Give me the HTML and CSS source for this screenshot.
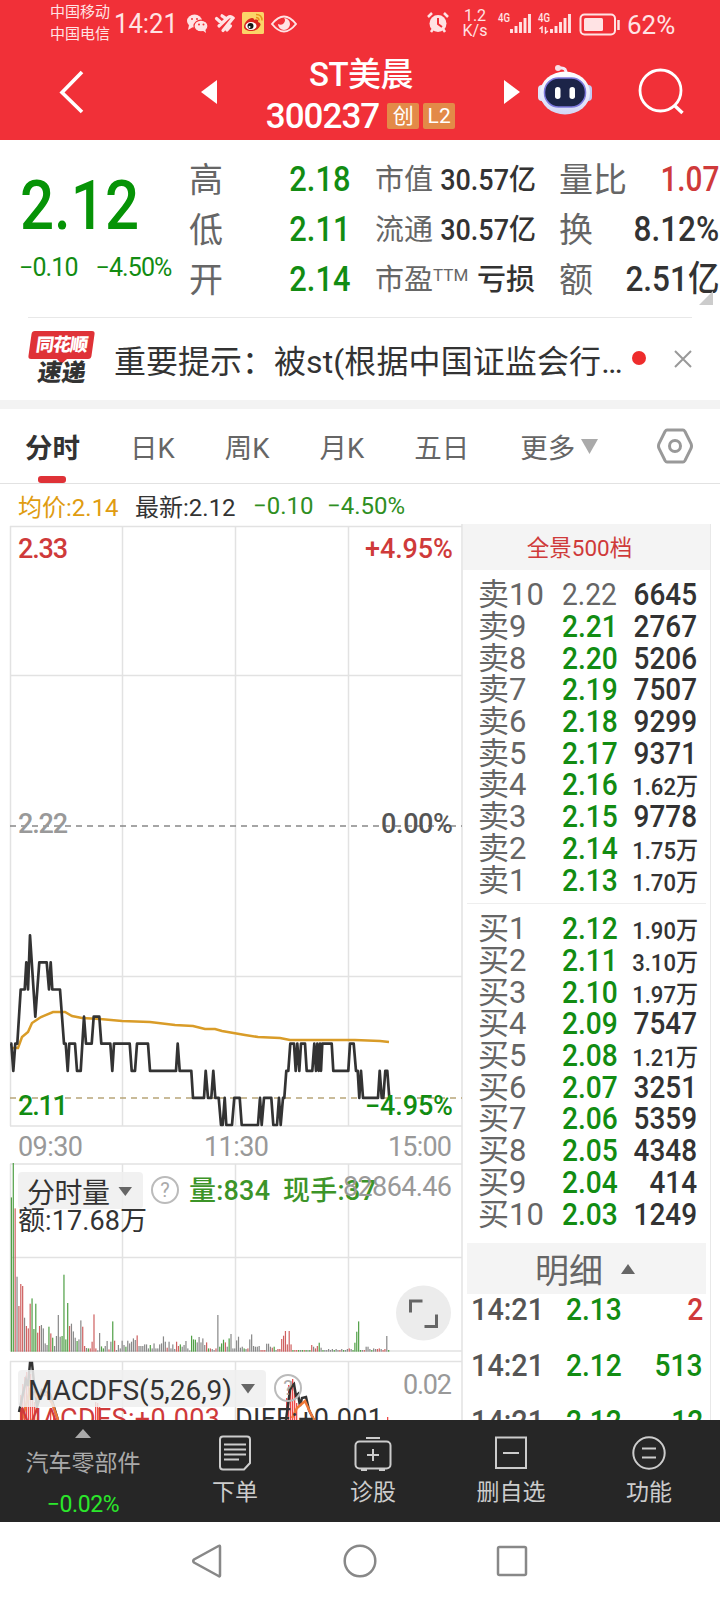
FILE: index.html
```html
<!DOCTYPE html>
<html lang="zh-CN">
<head>
    <meta charset="UTF-8">
    <meta name="viewport" content="width=device-width, initial-scale=1.0">
    <title>ST美晨 300237</title>
    <link rel="stylesheet" href="styles.css">
</head>
<body>
    <header class="top">
        <div class="status">
            <div class="carriers"><div>中国移动</div><div>中国电信</div></div>
            <div class="clock">14:21</div>
            <svg class="status-left" width="112" height="26" viewBox="185 9 112 26">
                <g fill="#ffe3e4">
                    <ellipse cx="194.500" cy="20" rx="7.500" ry="6.500"/>
                    <path d="M189 24l-1 5 5-3z"/>
                    <ellipse cx="201" cy="25" rx="7" ry="5.800" stroke="#f13038" stroke-width="1.200"/>
                    <path d="M202 29l4 3-1-5z"/>
                </g>
                <g fill="#f13038"><circle cx="192" cy="18" r="1"/><circle cx="197" cy="18" r="1"/><circle cx="199" cy="23.500" r="1"/><circle cx="203.500" cy="23.500" r="1"/></g>
                <g fill="none" stroke="#ffe3e4" stroke-width="3.200" stroke-linecap="round">
                    <path d="M216.500 17.500l5 4.500M219 25l9-8.500q2.500-2 5 .500l-10 12.500M222 14.800l3 2M230.500 25l-3.500 4"/>
                </g>
                <rect x="242" y="11" width="22" height="22" rx="1.500" fill="#fbd468"/>
                <path d="M244 26c0-5 5-9 8-9 2 0 2 1 2 2 3-1 5 0 4 2 3 1 3 3 2 4-2 4-6 5-9 5-4 0-7-2-7-4z" fill="#d9241f"/>
                <ellipse cx="251" cy="25" rx="5.500" ry="4" fill="#fff"/>
                <circle cx="250.500" cy="25" r="3" fill="#151515"/><circle cx="249.500" cy="26" r="1" fill="#fff"/>
                <path d="M256 13.500q6 0 6 6M256 16.500q3 0 3 3" fill="none" stroke="#e8931c" stroke-width="1.500"/>
                <path d="M272 23q12-15 24 0q-12 15-24 0z" fill="none" stroke="#ffe3e4" stroke-width="2"/>
                <path d="M284 17a6 6 0 1 1-6 6q4 2 6-1t0-5z" fill="#ffe3e4"/>
            </svg>
            <svg class="alarm" width="24" height="24" viewBox="0 0 24 24">
                <circle cx="12" cy="12.500" r="8.500" fill="#ffe3e4"/>
                <path d="M2 6l4-4M22 6l-4-4M5 21l2-3M19 21l-2-3" stroke="#ffe3e4" stroke-width="2.500"/>
                <path d="M12 7v6l4 3" fill="none" stroke="#f13038" stroke-width="2"/>
            </svg>
            <div class="speed"><div>1.2</div><div>K/s</div></div>
            <svg class="signal" width="126" height="28" viewBox="496 8 126 28">
                <g fill="#ffe3e4" font-family="Roboto, sans-serif" font-weight="500" font-size="12">
                    <text x="498" y="20.500" textLength="12" lengthAdjust="spacingAndGlyphs">4G</text>
                    <text x="538" y="20.500" textLength="12" lengthAdjust="spacingAndGlyphs">4G</text>
                </g>
                <path d="M511.500 32v-4M516 32v-7M520.500 32v-11M525 32v-15M529.500 32v-19M551.500 32v-4M556 32v-7M560.500 32v-11M565 32v-15M569.500 32v-19" stroke="#ffe3e4" stroke-width="2.900"/>
                <path d="M542 32v-6l-2.500 2M545.500 26v6l2.500-2" fill="none" stroke="#ffe3e4" stroke-width="1.500"/>
                <rect x="580.500" y="13.500" width="34.500" height="20" rx="4" fill="none" stroke="#ffe3e4" stroke-width="2"/>
                <rect x="584" y="17" width="19" height="13" rx="1.500" fill="#ffe3e4"/>
                <path d="M618.500 19v10" stroke="#ffe3e4" stroke-width="2.500"/>
            </svg>
            <div class="percent">62%</div>
        </div>
        <div class="titlebar">
            <svg class="back" width="26" height="44" viewBox="0 0 26 44"><path d="M24 2L4 22.500L24 42" fill="none" stroke="#fff" stroke-width="3.600"/></svg>
            <svg class="prev" width="16" height="24" viewBox="0 0 16 24"><path d="M16 0v24L0 12z" fill="#fff"/></svg>
            <div class="title">
                <div class="name">ST美晨</div>
                <div class="code"><span class="code-num">300237</span><span class="tag">创</span><span class="tag">L2</span></div>
            </div>
            <svg class="next" width="16" height="24" viewBox="0 0 16 24"><path d="M0 0v24L16 12z" fill="#fff"/></svg>
            <svg class="robot" width="54" height="52" viewBox="0 0 54 52">
                <defs>
                    <linearGradient id="shell" x1="0" y1="0" x2="0" y2="1"><stop offset="0" stop-color="#fff"/><stop offset=".6" stop-color="#e6e8fb"/><stop offset="1" stop-color="#d3d6f5"/></linearGradient>
                </defs>
                <path d="M28 11q1-8-6-7" fill="none" stroke="#f3e9f7" stroke-width="3"/>
                <circle cx="20" cy="4" r="3" fill="#f7dfe6"/>
                <rect x="0" y="21" width="8" height="16" rx="4" fill="#dfe4fa"/>
                <rect x="46" y="21" width="8" height="16" rx="4" fill="#c3c9f2"/>
                <ellipse cx="27" cy="29" rx="25" ry="21.500" fill="url(#shell)"/>
                <rect x="6.500" y="14" width="41" height="29" rx="14" fill="#1c2448" stroke="#7d78dd" stroke-width="1.500"/>
                <rect x="17" y="23" width="5.500" height="12" rx="2.700" fill="#fff"/>
                <rect x="31.500" y="23" width="5.500" height="12" rx="2.700" fill="#fff"/>
            </svg>
            <svg class="search" width="48" height="48" viewBox="0 0 48 48"><circle cx="22.500" cy="22.500" r="20.500" fill="none" stroke="#fff" stroke-width="2.800"/><path d="M36 37l8.500 8" stroke="#fff" stroke-width="3.500"/></svg>
        </div>
    </header>

    <section class="quote">
        <div class="last">
            <div class="price"><span class="num">2.12</span></div>
            <div class="change"><span>−0.10</span><span>−4.50%</span></div>
        </div>
        <div class="col col-a">
            <div class="cell"><label>高</label><b class="down">2.18</b></div>
            <div class="cell"><label>低</label><b class="down">2.11</b></div>
            <div class="cell"><label>开</label><b class="down">2.14</b></div>
        </div>
        <div class="col col-b">
            <div class="cell"><label>市值</label><b>30.57亿</b></div>
            <div class="cell"><label>流通</label><b>30.57亿</b></div>
            <div class="cell"><label>市盈<sup>TTM</sup></label><b class="text">亏损</b></div>
        </div>
        <div class="col col-c">
            <div class="cell"><label>量比</label><b class="up">1.07</b></div>
            <div class="cell"><label>换</label><b>8.12%</b></div>
            <div class="cell"><label>额</label><b>2.51亿</b></div>
            <i class="corner"></i>
        </div>
    </section>

    <section class="notice">
        <div class="logo">
            <div class="logo-top">同花顺</div>
            <div class="logo-bottom">速递</div>
        </div>
        <div class="notice-text">重要提示：<span>被st(根据中国证监会行…</span></div>
        <i class="dot"></i>
        <svg class="close" width="18" height="18" viewBox="0 0 18 18"><path d="M1 1l16 16M17 1L1 17" stroke="#999" stroke-width="2"/></svg>
    </section>

    <nav class="tabs">
        <span class="tab active">分时</span>
        <span class="tab">日K</span>
        <span class="tab">周K</span>
        <span class="tab">月K</span>
        <span class="tab">五日</span>
        <span class="tab more">更多<svg width="17" height="15" viewBox="0 0 17 15"><path d="M0 0h17L8.500 15z" fill="#aaa"/></svg></span>
        <svg class="setting" width="36" height="36" viewBox="0 0 36 36"><path d="M10 2h16q1 0 2 1.500l6 12q1 2.500 0 5l-6 12q-1 1.500-2 1.500H10q-1 0-2-1.500l-6-12q-1-2.500 0-5l6-12Q9 2 10 2z" fill="none" stroke="#999" stroke-width="3"/><circle cx="18" cy="18" r="5.500" fill="none" stroke="#999" stroke-width="3"/></svg>
    </nav>

    <div class="info">
        <span class="avg">均价:2.14</span>
        <span class="now">最新:2.12</span>
        <span class="diff">−0.10</span>
        <span class="rate">−4.50%</span>
    </div>

    <main class="main">
        <svg id="charts" class="charts" width="463" height="896" viewBox="0 524 463 896">
            <g class="grid">
                <path d="M10.500 526V1126M122.500 526V1126M235.500 526V1126M348.500 526V1126M10 526.500H462M10 675.500H462M10 976.500H462M10 1126H462"/>
                <path d="M10.500 1164V1351M122.500 1164V1351M235.500 1164V1351M348.500 1164V1351M10 1164H462M10 1257.500H462M10 1351H462"/>
                <path d="M10.500 1361V1420M122.500 1361V1420M235.500 1361V1420M348.500 1361V1420M10 1361.500H462"/>
                <path d="M462 524V1420" stroke-width="2"/>
            </g>
            <path d="M10 826H462" class="dash-mid"/>
            <path d="M10 1098H462" class="dash-low"/>
            <polyline id="avg-line"/>
            <polyline id="price-line"/>
            <g class="axis">
                <text x="18" y="558" textLength="50" class="up">2.33</text>
                <text x="365" y="558" textLength="88" class="up">+4.95%</text>
                <text x="18" y="833" textLength="50" class="grey">2.22</text>
                <text x="381" y="833" textLength="72" class="dark">0.00%</text>
                <text x="18" y="1115" textLength="50" class="down">2.11</text>
                <text x="365" y="1115" textLength="88" class="down">−4.95%</text>
                <text x="18" y="1155.500" textLength="65" class="grey time">09:30</text>
                <text x="204" y="1155.500" textLength="65" class="grey time">11:30</text>
                <text x="388" y="1155.500" textLength="64" class="grey time">15:00</text>
            </g>
            <g id="volume"></g>
            <rect x="18" y="1172" width="125" height="37" rx="4" class="pill"/>
            <text x="27" y="1203" textLength="83" class="name">分时量</text>
            <path d="M118.500 1187h13.500l-6.700 9z" fill="#666"/>
            <circle cx="165" cy="1190" r="13" class="help"/>
            <text x="165" y="1197" text-anchor="middle" class="help-mark">?</text>
            <text x="189" y="1200" textLength="81" class="vol">量:834</text>
            <text x="283" y="1200" textLength="93" class="vol">现手:37</text>
            <text x="343" y="1196" textLength="109" class="max">82864.46</text>
            <text x="18" y="1230" textLength="129" class="amount">额:17.68万</text>
            <circle cx="423.500" cy="1313" r="27.500" fill="#ececec"/>
            <path d="M410.500 1312.500v-11.500h12M424.500 1326.500h12v-12" fill="none" stroke="#666" stroke-width="3"/>

            <g id="macd"></g>
            <path class="dif" d="M19 1412L26 1380L28 1386L30 1363L32 1363L34 1383L37 1407L42 1390L50 1394L58 1420M286 1420L290 1390L292 1386L294 1384L296 1396L298 1394L300 1406L302 1398L306 1397L309 1410L314 1420"/>
            <path class="dea" d="M22 1420L30 1390L38 1398L46 1394L52 1403L58 1420M292 1418L297 1408L305 1401L310 1412L314 1420"/>
            <rect x="18" y="1370" width="248" height="37" rx="4" class="pill"/>
            <text x="28" y="1400" textLength="204" class="name">MACDFS(5,26,9)</text>
            <path d="M241 1384h14l-7 9.500z" fill="#666"/>
            <circle cx="288" cy="1388" r="13" class="help"/>
            <text x="288" y="1395" text-anchor="middle" class="help-mark">?</text>
            <text x="403" y="1394" textLength="49" class="max">0.02</text>
            <text x="18" y="1428" textLength="202" class="macd-up">MACDFS:+0.003</text>
            <text x="235" y="1428" textLength="148" class="macd-dif">DIFF:+0.001</text>
        </svg>

        <aside class="book">
            <div class="book-title">全景500档</div>
            <div class="levels" id="sells"></div>
            <div class="levels buys" id="buys"></div>
            <div class="detail">明细<i></i></div>
            <div class="trades">
                <div class="trade"><span>14:21</span><b class="down">2.13</b><b class="qty up">2</b></div>
                <div class="trade"><span>14:21</span><b class="down">2.12</b><b class="qty down">513</b></div>
                <div class="trade"><span>14:21</span><b class="down">2.12</b><b class="qty down">12</b></div>
            </div>
        </aside>
    </main>

    <footer class="toolbar">
        <div class="sector">
            <i></i>
            <div class="sector-name">汽车零部件</div>
            <div class="sector-rate">−0.02%</div>
        </div>
        <div class="tool">
            <svg width="38" height="36" viewBox="0 0 38 36"><path d="M7 1.500h24q3 0 3 3V28l-6 6.500H7q-3 0-3-3v-27q0-3 3-3z"/><path d="M8 9.500h22M8 14.500h22M8 19.500h22M8 24.500h15"/></svg>
            <div>下单</div>
        </div>
        <div class="tool">
            <svg width="38" height="36" viewBox="0 0 38 36"><rect x="1.500" y="6.500" width="35" height="27" rx="4"/><path d="M12 3h14M19 14v12M13 20h12"/><path d="M7 34.500h6M25 34.500h6" stroke-width="3"/></svg>
            <div>诊股</div>
        </div>
        <div class="tool">
            <svg width="38" height="36" viewBox="0 0 38 36"><rect x="4" y="2.500" width="30" height="30.500"/><path d="M11 18h16"/></svg>
            <div>删自选</div>
        </div>
        <div class="tool">
            <svg width="38" height="36" viewBox="0 0 38 36"><circle cx="19" cy="18" r="15.700"/><path d="M12 13.500h14M12 22.500h14"/></svg>
            <div>功能</div>
        </div>
    </footer>

    <div class="sysnav">
        <svg width="34" height="36" viewBox="0 0 34 36"><path d="M29 3.500v29q0 1.500-1.500.5L3 19.500q-1.500-1.500 0-3L27.500 3q1.500-.8 1.500.5z"/></svg>
        <svg width="34" height="36" viewBox="0 0 34 36"><circle cx="17" cy="18" r="15.300"/></svg>
        <svg width="34" height="36" viewBox="0 0 34 36"><rect x="3" y="4" width="28" height="28" rx="1.500"/></svg>
    </div>

    <script src="script.js"></script>
</body>
</html>
```
FILE: styles.css
```css
body {
    margin: 0;
    width: 720px;
    height: 1600px;
    overflow: hidden;
    background: #fff;
    color: #333;
    font-family: Roboto, "Noto Sans CJK SC", sans-serif;
}

svg { display: block; flex: none; }
i { display: block; }
b { font-weight: 500; }
.up { color: #cf3a3a; }
.down { color: #128c12; }

/* header */
.top {
    height: 140px;
    background: #f13038;
    color: #fff;
}

.status {
    display: flex;
    align-items: center;
    height: 46px;
    color: #ffe3e4;
    white-space: nowrap;
}

.carriers {
    width: 64px;
    margin-left: 50px;
    font-size: 15px;
    line-height: 22px;
}

.clock {
    width: 71px;
    padding-top: 1px;
    font-size: 27px;
    line-height: 46px;
    transform: scaleX(.95);
    transform-origin: left;
}

.alarm { margin-left: 129px; }

.speed {
    width: 36px;
    margin-left: 7px;
    text-align: center;
    font-size: 16px;
    line-height: 15px;
}

.signal { margin-left: 3px; }

.percent {
    margin-left: 5px;
    padding-top: 3px;
    font-size: 26px;
}

.titlebar {
    display: flex;
    align-items: center;
    height: 92px;
}

.back { margin-left: 58px; }
.prev { margin-left: 117px; }

.title {
    width: 242px;
    margin-left: 23px;
    padding-top: 2px;
    text-align: center;
}

.name {
    font-size: 33px;
    font-weight: 500;
    line-height: 42px;
    letter-spacing: -.5px;
}

.title .name {
    margin-top: 4px;
}

.code {
    display: flex;
    align-items: center;
    justify-content: center;
    gap: 4px;
    height: 41px;
    margin-left: -1px;
}

.code-num {
    margin-right: 4px;
    font-size: 35px;
    font-weight: 500;
    letter-spacing: -1px;
}

.tag {
    width: 32px;
    height: 26px;
    border-radius: 2px;
    background: #e38a48;
    font-size: 21px;
    line-height: 26px;
}

.next { margin-left: 22px; }
.robot { margin-left: 18px; margin-top: -5px; }
.search { margin-left: 46px; }

/* quote */
.quote {
    display: flex;
    height: 177px;
}

.last { width: 189px; }

.price {
    height: 95px;
    padding-left: 20px;
    color: #069306;
    font-size: 69px;
    font-weight: 500;
    line-height: 132px;
}

.price .num {
    display: inline-block;
    transform: scaleX(.87);
    transform-origin: left;
}

.change {
    display: flex;
    gap: 18px;
    padding: 18px 0 0 19px;
    color: #128c12;
    font-size: 25px;
    line-height: 30px;
    letter-spacing: -.9px;
}

.change span { white-space: nowrap; }

.col {
    padding-top: 15px;
}

.col-a { width: 161px; }
.col-b { width: 160px; margin-left: 25px; }
.col-c { width: 160px; margin-left: 24px; position: relative; }

.cell {
    display: flex;
    align-items: center;
    justify-content: space-between;
    height: 50px;
    white-space: nowrap;
}

.cell label {
    color: #666;
    font-size: 34px;
    line-height: 50px;
}

.cell b {
    font-size: 35px;
    line-height: 50px;
    transform: scaleX(.9);
    transform-origin: right;
}

.cell b.down { transform: scaleX(.88); }
.cell b.up { transform: scaleX(.85); }
.col-b label { font-size: 29px; }
.col-b b { font-size: 29px; transform: scaleX(.93); }
.col-b .text { transform: none; }

.cell sup {
    font-size: 17px;
    line-height: 0;
    vertical-align: 9px;
}

.corner {
    position: absolute;
    right: 6px;
    bottom: 12px;
    border-left: 14px solid transparent;
    border-bottom: 14px solid #ccc;
}

/* notice */
.notice {
    display: flex;
    align-items: center;
    height: 82px;
    margin: 0 28px;
    border-top: 1px solid #e8e8e8;
}

.logo {
    width: 68px;
    margin-top: -3px;
    text-align: center;
    font-weight: 900;
}

.logo-top {
    position: relative;
    width: 63px;
    height: 28px;
    margin-left: 2px;
    border-radius: 3px;
    background: #df3237;
    color: #fff;
    font-size: 18px;
    line-height: 28px;
    letter-spacing: -1px;
    transform: skewX(-8deg);
}

.logo-top::after {
    content: "";
    position: absolute;
    left: 29px;
    top: 28px;
    border: 5px solid transparent;
    border-top-color: #df3237;
    border-bottom: 0;
}

.logo-bottom {
    font-size: 24px;
    line-height: 29px;
    height: 25px;
    transform: skewX(-8deg);
}

.notice-text {
    width: 516px;
    margin-left: 18px;
    font-size: 32px;
    white-space: nowrap;
}

.notice-text span { letter-spacing: .1px; }

.dot {
    width: 14px;
    height: 14px;
    margin-left: 2px;
    margin-top: -2px;
    border-radius: 50%;
    background: #ee2c2c;
}

.close { margin-left: 28px; }

/* tabs */
.tabs {
    display: flex;
    align-items: center;
    height: 74px;
    border-top: 9px solid #f3f3f3;
    border-bottom: 1px solid #e2e2e2;
    color: #666;
    font-size: 27.500px;
}

.tab { margin-right: 50px; white-space: nowrap; }

.tab.active {
    position: relative;
    margin-left: 25px;
    color: #333;
    font-weight: 700;
}

.tab.active::after {
    content: "";
    position: absolute;
    left: 13px;
    bottom: -17px;
    width: 28px;
    height: 7px;
    border-radius: 3px;
    background: #df3237;
}

.tab.more {
    display: flex;
    align-items: center;
    gap: 6px;
    margin-right: 0;
    margin-left: 1px;
}

.setting { margin: 0 27px 0 auto; }

.info {
    display: flex;
    align-items: center;
    height: 40px;
    padding: 3px 0 0 18px;
    box-sizing: border-box;
    font-size: 24px;
    white-space: nowrap;
}

.info .avg { width: 117px; color: #e09c10; }
.info .now { width: 118px; }
.info .diff { width: 74px; color: #2f8f22; }
.info .rate { color: #2f8f22; }

/* charts */
.main {
    display: flex;
    height: 896px;
    overflow: hidden;
}

.charts { font-weight: 400; }
.charts text { fill: #333; }
.grid path { fill: none; stroke: #e2e2e2; stroke-width: 1.500; }
.dash-mid { stroke: #888; stroke-width: 1.500; stroke-dasharray: 6 5; }
.dash-low { stroke: #b8a578; stroke-width: 1.500; stroke-dasharray: 6 5; }
#avg-line { fill: none; stroke: #d99c28; stroke-width: 2.500; }
#price-line { fill: none; stroke: #333; stroke-width: 2.700; stroke-linejoin: round; }
.axis { font-size: 27px; font-weight: 500; }
.axis text.grey { fill: #999; }
.axis text.time { font-weight: 400; }
.axis text.up { fill: #cf3a3a; }
.axis text.down { fill: #128c12; }
.axis text.dark { fill: #555; }
.pill { fill: #eee; fill-opacity: .85; }
.charts text.name { font-size: 28px; letter-spacing: 0; font-weight: 400; }
.help { fill: none; stroke: #bbb; stroke-width: 2; }
.charts text.help-mark { fill: #aaa; font-size: 20px; }
.charts text.vol { fill: #3c9428; font-size: 27px; font-weight: 500; }
.charts text.max { fill: #999; font-size: 27px; }
.charts text.amount { font-size: 27px; }
.charts text.macd-up { fill: #cf3a3a; font-size: 27px; }
.charts text.macd-dif { font-size: 27px; }
.dif { fill: none; stroke: #333; stroke-width: 2.500; }
.dea { fill: none; stroke: #f07838; stroke-width: 2.500; }

/* order book */
.book {
    width: 247px;
    border-right: 1px solid #e8e8e8;
}

.book-title {
    height: 46px;
    background: #f4f4f4;
    color: #cf3a3a;
    font-size: 22.500px;
    line-height: 48px;
    text-align: center;
    text-indent: -14px;
}

.levels {
    height: 317px;
    margin: 0 4px;
    padding: 9px 9px 7px 12px;
    border-bottom: 1px solid #eee;
}

.levels.buys {
    height: 318px;
    padding-top: 9px;
    padding-bottom: 12px;
    border-bottom: 0;
}

.level {
    display: flex;
    align-items: center;
    height: 31.700px;
    white-space: nowrap;
}

.level span {
    flex: none;
    width: 84px;
    margin-left: -1px;
    color: #666;
    font-size: 31px;
    line-height: 31px;
}

.level b {
    flex: none;
    width: 62px;
    font-size: 32px;
    line-height: 31px;
    transform: scaleX(.88);
    transform-origin: left;
}

.level .flat { color: #666; font-weight: 400; }

.level .qty {
    width: 72px;
    margin-left: auto;
    font-size: 31px;
    text-align: right;
    transform: scaleX(.9);
    transform-origin: right;
}

.level .qty.small {
    padding-top: 4px;
    font-size: 24.500px;
}

.detail {
    display: flex;
    align-items: center;
    justify-content: center;
    gap: 18px;
    height: 51px;
    margin: 0 4px;
    background: #f4f4f4;
    color: #666;
    font-size: 34px;
}

.detail i {
    margin-right: 3px;
    border: 7px solid transparent;
    border-top: 0;
    border-bottom: 10px solid #666;
}

.trades { padding: 0 7px 0 8px; }

.trade {
    display: flex;
    align-items: center;
    height: 56px;
    font-size: 32px;
}

.trades .trade:first-child { margin-top: -13px; }

.trade span {
    width: 95px;
    color: #555;
    font-weight: 500;
    font-size: 31px;
    transform: scaleX(.93);
    transform-origin: left;
}

.trade b {
    transform: scaleX(.88);
    transform-origin: left;
}

.trade .qty {
    margin-left: auto;
    transform-origin: right;
}

/* toolbar */
.toolbar {
    display: flex;
    height: 102px;
    background: #262626;
    color: #ccc;
}

.sector {
    display: flex;
    flex-direction: column;
    align-items: center;
    width: 166px;
}

.sector i {
    margin-top: 9px;
    border: 8px solid transparent;
    border-top: 0;
    border-bottom: 9px solid #aaa;
}

.sector-name {
    color: #aaa;
    font-size: 23px;
    line-height: 32px;
    margin-top: 10px;
}

.sector-rate {
    margin-top: 9px;
    color: #2be62b;
    font-size: 23px;
    line-height: 32px;
    letter-spacing: -.4px;
}

.tool {
    display: flex;
    flex-direction: column;
    align-items: center;
    width: 138px;
    padding-top: 15px;
    font-size: 23px;
    line-height: 34px;
}

.tool div { margin-top: 5px; }

.tool svg {
    fill: none;
    stroke: #ccc;
    stroke-width: 2;
}

.sysnav {
    display: flex;
    justify-content: center;
    align-items: center;
    gap: 118px;
    height: 78px;
}

.sysnav svg {
    fill: none;
    stroke: #888;
    stroke-width: 2.500;
}
```
FILE: script.js
```js
const sells = [
    ['卖10', '2.22', '6645'], ['卖9', '2.21', '2767'], ['卖8', '2.20', '5206'], ['卖7', '2.19', '7507'],
    ['卖6', '2.18', '9299'], ['卖5', '2.17', '9371'], ['卖4', '2.16', '1.62万'], ['卖3', '2.15', '9778'],
    ['卖2', '2.14', '1.75万'], ['卖1', '2.13', '1.70万']
];
const buys = [
    ['买1', '2.12', '1.90万'], ['买2', '2.11', '3.10万'], ['买3', '2.10', '1.97万'], ['买4', '2.09', '7547'],
    ['买5', '2.08', '1.21万'], ['买6', '2.07', '3251'], ['买7', '2.06', '5359'], ['买8', '2.05', '4348'],
    ['买9', '2.04', '414'], ['买10', '2.03', '1249']
];

function renderLevels(id, rows) {
    document.getElementById(id).innerHTML = rows.map(([label, price, qty]) => `
        <div class="level">
            <span>${label}</span>
            <b class="${price === '2.22' ? 'flat' : 'down'}">${price}</b>
            <b class="qty ${qty.endsWith('万') ? 'small' : ''}">${qty}</b>
        </div>
    `).join('');
}

renderLevels('sells', sells);
renderLevels('buys', buys);

// x position (thirds of a pixel) and price in cents above 2.11
const prices = [
    31,3, 34,3, 40,2, 46,3, 52,3, 62,5, 74,5, 79,6, 84,5, 90,7, 106,4, 118,6, 140,6, 147,5, 152,6, 157,5,
    180,5, 192,3, 197,3, 203,2, 208,3, 225,3, 231,2, 242,2, 252,4, 258,3, 275,3, 281,4, 298,4, 304,3,
    331,3, 337,2, 342,3, 389,3, 395,2, 405,2, 411,3, 444,3, 450,2, 528,2, 533,3, 539,2, 574,2, 579,1,
    612,1, 617,2, 624,1, 634,1, 640,2, 646,1, 656,1, 663,0, 668,0, 674,1, 679,0, 696,0, 703,1, 719,1,
    725,0, 774,0, 780,1, 785,0, 792,1, 814,1, 820,0, 831,0, 837,1, 842,0, 849,1, 853,1, 859,2, 865,2,
    871,3, 882,3, 887,2, 892,3, 898,2, 903,3, 915,3, 920,2, 937,2, 943,3, 948,2, 952,3, 956,2, 960,3,
    963,2, 967,3, 995,3, 1000,2, 1045,2, 1050,3, 1061,3, 1068,2, 1073,2, 1078,1, 1083,2, 1089,1,
    1134,1, 1139,2, 1145,1, 1150,1, 1156,2, 1162,2, 1168,1
];
const points = [];
for (let i = 0; i < prices.length; i += 2) {
    points.push(`${(prices[i] / 3).toFixed(1)},${(1125 - prices[i + 1] * 27.1).toFixed(1)}`);
}
document.getElementById('price-line').setAttribute('points', points.join(' '));

document.getElementById('avg-line').setAttribute('points',
    '11,1048 18,1048 22,1037 28,1032 32,1023 41,1017 53,1012 65,1012 72,1016 82,1018 100,1019 122,1021 ' +
    '150,1022 175,1025 193,1026 205,1029 215,1029 222,1031 245,1035 258,1037 280,1038 290,1040 355,1040 ' +
    '380,1041 389,1042');

// minute volumes: g = down, r = up, k = flat
const volumes = ('463g 566g 430r 225k 137r 203r 197r 102k 77r 70r 144r 160g 68g 144g 57r 77r 80k 70k 25k 20k ' +
    '75g 55r 42g 17k 47k 110k 45k 47g 231g 37g 146g 77r 84k 61k 42k 32g 37k 94k 75r 17r 11k 10g 10r 30r 112r ' +
    '10r 4k 56k 16g 10g 17k 32k 7r 30k 91g 33r 5k 20k 10k 33k 20k 15g 33k 25k 30k 40k 35k 49r 17k 17k 17k 22k ' +
    '22k 10k 20g 10k 25k 10k 10k 22k 25k 46k 30k 12r 30k 10k 22k 8k 30r 17r 22g 15k 20k 32k 10k 4k 48g 37g ' +
    '36g 28k 44k 28k 40k 20k 28r 10g 10r 8k 5k 10r 110k 15g 25g 36g 28r 15k 40g 53k 10k 10k 34k 45k 12k 15k ' +
    '10g 8k 10r 37k 52k 17k 15k 15k 17k 5r 5r 5r 24k 24k 15k 12r 15g 5k 8r 8r 38r 48r 62r 22r 62r 22r 5g 5r ' +
    '5r 5g 5k 5g 5r 5g 5k 5g 20r 15k 10r 17r 27g 12k 5g 5k 5k 8k 5k 8k 5g 8k 5k 5r 8k 5g 5k 8k 10r 8k 5g 27g ' +
    '60g 91g 5g 5k 5r 15k 15k 8k 5g 10k 8k 8r 10r 8k 5r 8r 47k 5g').split(' ');
const barColor = { g: '#4f9f45', r: '#cf6060', k: '#888' };
document.getElementById('volume').innerHTML = volumes.map((v, i) => {
    const h = parseInt(v) / 3;
    return `<rect x="${(10.8 + i * 1.877).toFixed(2)}" y="${(1351.7 - h).toFixed(1)}" width="1.2" height="${h.toFixed(1)}" fill="${barColor[v.slice(-1)]}"/>`;
}).join('');

// MACD histogram
const macd = [
    [20, 1395], [22, 1384], [24, 1377], [26, 1372], [28, 1378], [30, 1374], [32, 1386], [34, 1402], [50, 1410], [53, 1413],
    [95, 1402], [97, 1403], [99, 1407], [286, 1398], [288, 1385], [290, 1381], [292, 1379], [294, 1392], [296, 1403], [387, 1417]
];
document.getElementById('macd').innerHTML = macd.map(([x, y]) =>
    `<rect x="${x}" y="${y}" width="1.3" height="${1420 - y}" fill="#ee4a48"/>`).join('');
```
